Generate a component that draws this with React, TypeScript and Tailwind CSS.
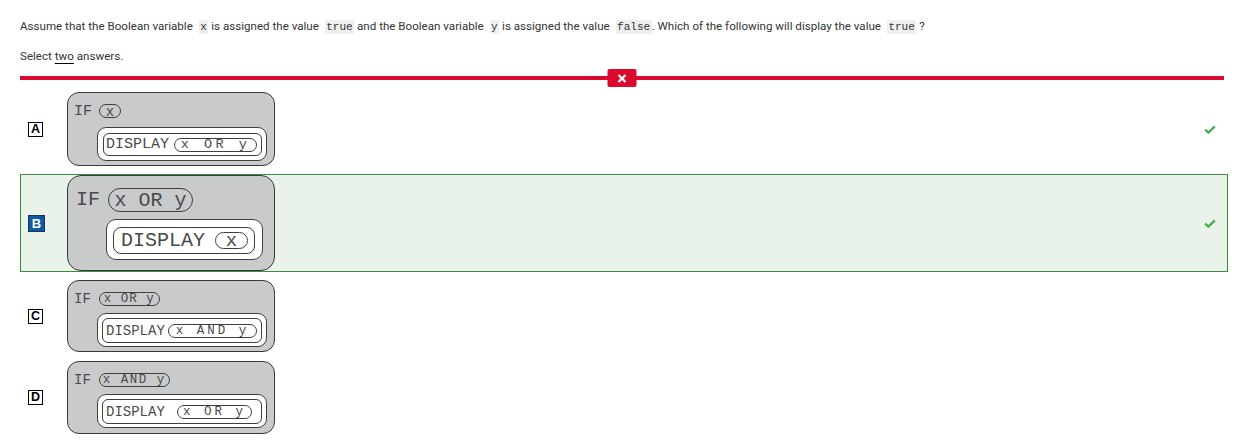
import React from "react";

type Diagram = {
  box: string;
  row1: string;
  size: string;
  ifPill: string;
  ifText: string;
  ifTrack: string;
  white: string;
  inner: string;
  pill: string;
  pillText: string;
  pillTrack: string;
};

const diagrams: Diagram[] = [
  {
    box: "h-[74px] rounded-[12px]",
    row1: "mt-[11px] ml-[6px] h-[14px]",
    size: "text-[15px]",
    ifPill: "ml-[7px] w-[22px] h-[14px] pt-[1px] text-[14px]",
    ifText: "x",
    ifTrack: "",
    white: "mt-[9px] ml-[29px] w-[170px] h-[34px] rounded-[9px] pl-[5px] pr-[4px] pt-[5px] pb-[4px]",
    inner: "rounded-[6px] pl-[2px] pr-[4px]",
    pill: "w-[83px] h-[14px] pt-[1px] text-[13.5px]",
    pillText: "x OR y",
    pillTrack: "tracking-[3.5px]",
  },
  {
    box: "h-[96px] rounded-[14px]",
    row1: "mt-[12px] ml-[8px] h-[24px]",
    size: "text-[20px]",
    ifPill: "ml-[8px] w-[85px] h-[24px] pt-[1px]",
    ifText: "x OR y",
    ifTrack: "",
    white: "mt-[7px] ml-[38px] w-[157px] h-[41px] rounded-[10px] pl-[6px] pr-[7px] pt-[7px] pb-[5px]",
    inner: "rounded-[8px] pl-[7px] pr-[6px]",
    pill: "w-[33px] h-[17px] pt-[1px] text-[19px]",
    pillText: "x",
    pillTrack: "",
  },
  {
    box: "h-[72px] rounded-[12px]",
    row1: "mt-[11px] ml-[6px] h-[14px]",
    size: "text-[14px]",
    ifPill: "ml-[8px] w-[61px] h-[14px] pt-[1px] text-[12.5px]",
    ifText: "x OR y",
    ifTrack: "tracking-[1px]",
    white: "mt-[7px] ml-[29px] w-[170px] h-[34px] rounded-[9px] pl-[4px] pr-[4px] pt-[4px] pb-[3px]",
    inner: "rounded-[6px] pl-[3px] pr-[4px]",
    pill: "w-[89px] h-[14px] pt-[1px] text-[12.5px]",
    pillText: "x AND y",
    pillTrack: "tracking-[3px]",
  },
  {
    box: "h-[73px] rounded-[12px]",
    row1: "mt-[11px] ml-[6px] h-[14px]",
    size: "text-[14px]",
    ifPill: "ml-[8px] w-[71px] h-[14px] pt-[1px] text-[12.5px]",
    ifText: "x AND y",
    ifTrack: "tracking-[1.5px]",
    white: "mt-[7px] ml-[29px] w-[170px] h-[34px] rounded-[9px] pl-[4px] pr-[4px] pt-[4px] pb-[3px]",
    inner: "rounded-[6px] pl-[3px] pr-[9px]",
    pill: "w-[75px] h-[14px] pt-[1px] text-[12.5px]",
    pillText: "x OR y",
    pillTrack: "tracking-[3px]",
  },
];

function Code({ children }: { children: React.ReactNode }) {
  return (
    <code className="ml-[3px] bg-[#efefef] px-[1.5px] py-[1px] font-['Liberation_Mono',monospace] text-[11px] text-[#333]">
      {children}
    </code>
  );
}

function Pill({ cls, track, text }: { cls: string; track: string; text: string }) {
  return (
    <span className={`flex items-center justify-center whitespace-pre rounded-full border border-[#3f3f3f] ${cls}`}>
      <span className={track}>{text}</span>
    </span>
  );
}

function Block({ d }: { d: Diagram }) {
  return (
    <div
      className={`flex w-[208px] flex-col border border-[#383838] bg-[#c9cacc] font-['Liberation_Mono',monospace] leading-none text-[#4a4a4a] ${d.box} ${d.size}`}
    >
      <div className={`flex items-center ${d.row1}`}>
        <span>IF</span>
        <Pill cls={d.ifPill} track={d.ifTrack} text={d.ifText} />
      </div>
      <div className={`border border-[#3f3f3f] bg-white ${d.white}`}>
        <div className={`flex h-full items-center justify-between border border-[#3f3f3f] ${d.inner}`}>
          <span>DISPLAY</span>
          <Pill cls={`bg-white ${d.pill}`} track={d.pillTrack} text={d.pillText} />
        </div>
      </div>
    </div>
  );
}

function Check() {
  return (
    <svg width="12" height="9" viewBox="0 0 12 9" fill="none">
      <path d="M1.2 4.6 L4.4 7.6 L10.8 1.4" stroke="#4caf50" strokeWidth="2.4" />
    </svg>
  );
}

const letters = ["A", "B", "C", "D"];

export default function App() {
  return (
    <div className="h-[441px] w-[1256px] overflow-hidden bg-white pt-[16px] pl-[20px] pr-[28px] font-['Roboto',sans-serif] text-[#333]">
      <p className="text-[11.6px] leading-[20px]">
        Assume that the Boolean variable <Code>x</Code> is assigned the value <Code>true</Code> and the Boolean
        variable <Code>y</Code> is assigned the value <Code>false</Code>. Which of the following will display the
        value <Code>true</Code> ?
      </p>
      <p className="mt-[9px] text-[11.6px] leading-[20px]">
        Select <span className="underline decoration-black underline-offset-[3px]">two</span> answers.
      </p>

      <div className="relative mt-[10px] mr-[4px] h-[4px] bg-[#da0a2e]">
        <div className="absolute left-1/2 top-1/2 flex h-[18px] w-[29px] -translate-x-1/2 -translate-y-1/2 items-center justify-center rounded-[2px] bg-[#da0a2e]">
          <svg width="9" height="9" viewBox="0 0 9 9">
            <path d="M1 1 L8 8 M8 1 L1 8" stroke="white" strokeWidth="2.2" />
          </svg>
        </div>
      </div>

      <div className="mt-[11px] flex flex-col gap-[7px]">
        {diagrams.map((d, i) => {
          const chosen = i === 1;
          return (
            <div
              key={letters[i]}
              className={`flex items-center border pl-[7px] pr-[11px] ${
                chosen ? "border-[#3d8b3d] bg-[#e9f3ea]" : "border-transparent"
              }`}
            >
              <div className="w-[17px]">
                {chosen ? (
                  <span className="flex h-[17px] w-[17px] items-center justify-center border border-[#1d3550] bg-[#0a5aa8] font-['Liberation_Sans',sans-serif] text-[13px] font-bold leading-none text-white">
                    B
                  </span>
                ) : (
                  <span className="flex h-[15px] w-[15px] items-center justify-center border border-black bg-white font-['Liberation_Sans',sans-serif] text-[12.5px] font-bold leading-none text-black">
                    {letters[i]}
                  </span>
                )}
              </div>
              <div className="ml-[22px]">
                <Block d={d} />
              </div>
              <div className="flex-1" />
              {i < 2 && <Check />}
            </div>
          );
        })}
      </div>
    </div>
  );
}
